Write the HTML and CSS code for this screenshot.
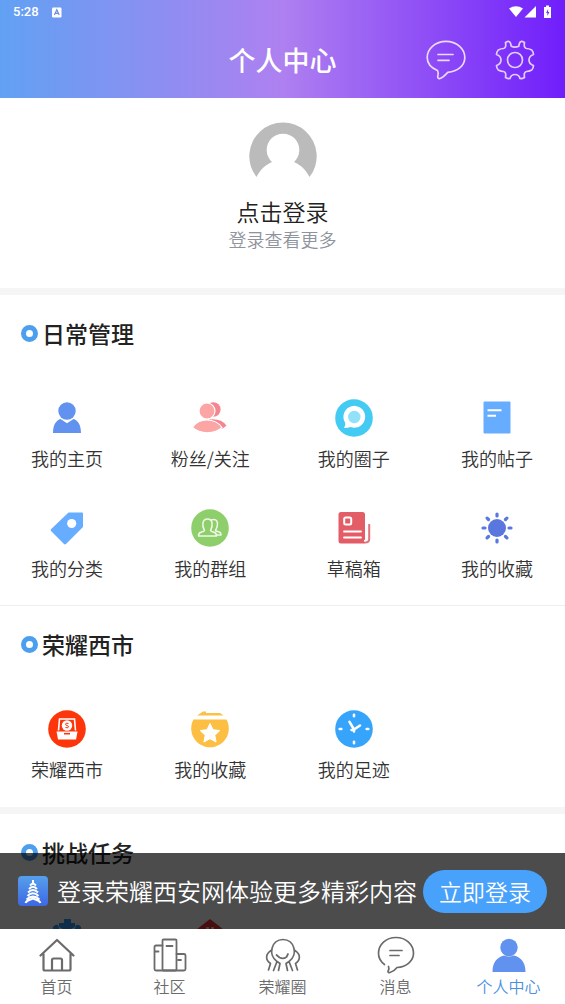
FILE: index.html
```html
<!DOCTYPE html>
<html lang="zh-CN">
<head>
<meta charset="utf-8">
<meta name="viewport" content="width=device-width, initial-scale=1">
<title>个人中心</title>
<link rel="stylesheet" href="styles.css">
</head>
<body>
<div class="app">
  <header class="header">
    <div class="status">
      <span>5:28</span>
      <svg class="status-app" width="10" height="11" viewBox="0 0 10 11"><rect y="0.5" width="9.5" height="10" rx="1.2" fill="#fff"/><path d="M2.4 8 4.8 2.8 7.2 8M3.3 6.4h3" fill="none" stroke="#6f8fd8" stroke-width="1.2"/></svg>
      <svg class="status-system" width="44" height="14" viewBox="0 0 44 14" fill="#fff"><path d="M1 3.500Q8-1 15 3.500L8 12Z"/><path d="M28 1v11.500H16.500Z"/><path d="M36 2h2V.5h3V2h2v11h-7z"/><path d="m40.100 4-2 4h1.300v3l2-4h-1.300z" fill="#7130f5"/></svg>
    </div>
    <div class="titlebar">
      <h1 class="title">个人中心</h1>
      <div class="actions">
        <button class="icon-button" type="button" aria-label="消息">
          <svg width="40" height="40" viewBox="0 0 40 40" fill="none" stroke="#ecd9fc" stroke-width="1.700" stroke-linecap="round" stroke-linejoin="round"><path d="M11.500 30.500C5 27.800 1.200 23 1.200 17.500 1.200 8.500 9.500 1.300 20 1.300s18.800 7.200 18.800 16.200c0 8.300-7 14-17 14.800-2.800 3-5.200 5.500-8.300 6.300-1.800.3-2-1.600-1.600-3 .8-1.700.3-3.600-.4-5.100Z"/><path d="M12 14.500h15M12 20.300h11"/></svg>
        </button>
        <button class="icon-button" type="button" aria-label="设置">
          <svg width="40" height="40" viewBox="0 0 40 40" fill="none" stroke="#e2cdfc" stroke-width="1.700" stroke-linejoin="round"><path d="M16.200 6.200Q15.700 2 14 1.500Q12.500 1.300 10.500 2.500Q11.500 8 8.500 8.500Q6 8.500 3.300 10Q1.500 12 1.500 14.500Q6 16 6 20Q6 24 1.500 25.500Q1.500 28 3.300 30Q6 31.500 8.500 31.500Q11.500 32 10.500 37.500Q13 39 15 38.500Q16 34.500 20 34.500Q24 34.500 25 38.500Q27 39 29.500 37.500Q28.500 32 31.500 31.500Q34 31.500 36.700 30Q38.500 28 38.500 25.500Q34 24 34 20Q34 16 38.500 14.500Q38.500 12 36.700 10Q34 8.500 31.500 8.500Q28.500 8 29.500 2.500Q27.500 1.300 26 1.500Q24.300 2 23.800 6.200Q20 8 16.200 6.200Z"/><circle cx="20" cy="20" r="7.500"/></svg>
        </button>
      </div>
    </div>
  </header>

  <div class="stage">
    <main class="content">
      <a class="profile" href="#login">
        <svg class="avatar" width="68" height="68" viewBox="0 0 68 68"><path d="M7.500 55A33.700 33.700 0 1 1 60.500 55C57 48 52 43 45 40A16.300 16.300 0 1 0 23 40C16 43 11 48 7.500 55Z" fill="#bbb"/></svg>
        <span class="profile-name">点击登录</span>
        <span class="profile-hint">登录查看更多</span>
      </a>

      <section class="section section-ruled">
        <h2 class="section-title">日常管理</h2>
        <div class="grid">
          <a class="entry" href="#home">
            <svg width="38" height="38" viewBox="0 0 38 38" fill="#6192ef"><circle cx="19" cy="12" r="8.700"/><path d="M5 34C5 25.500 8.500 21 12.500 20l6.500 4.300L25.500 20C29.500 21 33 25.500 33 34Z"/></svg>
            <span>我的主页</span>
          </a>
          <a class="entry" href="#fans">
            <svg width="38" height="38" viewBox="0 0 38 38"><g fill="#f58590"><circle cx="22.300" cy="10.500" r="7.300"/><path d="M18 20.500q12-1.500 17.500 6-4 4.500-9 3.500Z"/></g><g fill="#fca5a5" stroke="#fff" stroke-width="1.200"><circle cx="16" cy="12" r="8"/><path d="M1.500 28.500C8 18.500 24 18.500 31 28.500 24 35.500 9 35.500 1.500 28.500Z"/></g></svg>
            <span>粉丝/关注</span>
          </a>
          <a class="entry" href="#circle">
            <svg width="38" height="38" viewBox="0 0 38 38"><circle cx="19" cy="19" r="18.800" fill="#43cbf3"/><path d="M9 29q2-3 1-5.500A10.900 10.900 0 1 1 15.500 28Q13 29 9 29Z" fill="#fff"/><circle cx="19.300" cy="18" r="6.200" fill="#91e1f9"/></svg>
            <span>我的圈子</span>
          </a>
          <a class="entry" href="#posts">
            <svg width="38" height="38" viewBox="0 0 38 38"><rect x="5.500" y="2.500" width="27" height="32" rx="1" fill="#66adff"/><path d="M9.500 11.200h14M9.500 16.700h8.500" stroke="#fff" stroke-width="2"/></svg>
            <span>我的帖子</span>
          </a>
          <a class="entry" href="#tags">
            <svg width="38" height="38" viewBox="0 0 38 38"><path d="M20.500 3.500H34q1 0 1 1V18L18 35q-1 .8-2 0L3 22q-.7-1 0-1.800Z" fill="#66adff"/><circle cx="23.700" cy="14.500" r="4.600" fill="#fff"/></svg>
            <span>我的分类</span>
          </a>
          <a class="entry" href="#groups">
            <svg width="38" height="38" viewBox="0 0 38 38"><circle cx="19" cy="19" r="18.800" fill="#8fcf6b"/><g fill="none" stroke="#f0fae9" stroke-width="1.500" stroke-linejoin="round"><path d="M13.500 21.500C10.500 16 11.500 10 16.500 10s6 6 3 11.500q.3 1 3.500 1.800 2.500.7 2.500 3.700h-18q0-3 2.500-3.700 3.200-.8 3.500-1.800Z"/><path d="M20 11q6-2 6.500 3.500 0 4-2 7 .5.800 3 1.300 2.500.5 2.500 3.200h-4.500"/></g></svg>
            <span>我的群组</span>
          </a>
          <a class="entry" href="#drafts">
            <svg width="38" height="38" viewBox="0 0 38 38"><path d="M6 3h21.500q2.500 0 2.500 2.500v29H6q-2.500 0-2.500-2.500V5.500Q3.500 3 6 3Z" fill="#e35d67"/><path d="M30 33.500q4.200 0 4.200-3.500V15" fill="none" stroke="#e3747b" stroke-width="2"/><path d="M31 14v15.500q0 2.500-2 2.500" fill="none" stroke="#fff" stroke-width="1.500"/><rect x="9.200" y="8.500" width="7" height="7" rx="1.500" fill="none" stroke="#fff" stroke-width="2"/><path d="M9 22.500h17M9 28.500h17" stroke="#fff" stroke-width="1.800" stroke-linecap="round"/></svg>
            <span>草稿箱</span>
          </a>
          <a class="entry" href="#favorites">
            <svg width="38" height="38" viewBox="0 0 38 38"><circle cx="19" cy="19" r="9" fill="#5a76df"/><path d="M19 5v2M19 31v2M5 19h2M31 19h2M9.100 9.100l1.400 1.400M27.500 27.500l1.400 1.400M9.100 28.900l1.400-1.400M27.500 10.500l1.400-1.400" stroke="#5a76df" stroke-width="3.200" stroke-linecap="round"/></svg>
            <span>我的收藏</span>
          </a>
        </div>
      </section>

      <section class="section section-banded">
        <h2 class="section-title">荣耀西市</h2>
        <div class="grid">
          <a class="entry" href="#market">
            <svg width="38" height="38" viewBox="0 0 38 38"><circle cx="19" cy="19" r="18.800" fill="#fc350b"/><path d="M10.500 20.500 11.500 9h15l1 11.500" fill="none" stroke="#fff" stroke-width="1.600"/><circle cx="19" cy="15.500" r="5.200" fill="#fff"/><path d="M20.500 13.500q-3-1-3 .7 0 1 1.500 1.300t1.500 1.300q0 1.700-3 .7" fill="none" stroke="#fc350b" stroke-width="1"/><path d="M8.500 21.500h21L28 29.500H10Z" fill="#fff"/><path d="M16 23.700h6" stroke="#fc350b" stroke-width="1.600"/></svg>
            <span>荣耀西市</span>
          </a>
          <a class="entry" href="#market-favorites">
            <svg width="38" height="38" viewBox="0 0 38 38"><path d="M6 5.500 12 1.500h3V3h14l3.500 2.500Z" fill="#fcc046"/><path d="M2.500 9.500h33A18.800 18.800 0 1 1 2.500 9.500Z" fill="#fdbf43"/><path d="m19 13.500 3 6.200 6.800.9-5 4.700 1.300 6.700-6.100-3.300-6.100 3.300 1.300-6.700-5-4.700 6.800-.9Z" fill="#fff" stroke="#fff" stroke-linejoin="round"/></svg>
            <span>我的收藏</span>
          </a>
          <a class="entry" href="#footprints">
            <svg width="38" height="38" viewBox="0 0 38 38"><circle cx="19" cy="19" r="18.800" fill="#36a4fb"/><path d="M19 4.700v1.600M19 31.700v1.600M4.700 19h1.600M31.700 19h1.600M14.500 11.800 19 19.500l6-4M16.500 20l2.500-.5v2" fill="none" stroke="#fff" stroke-width="2.600" stroke-linecap="round"/></svg>
            <span>我的足迹</span>
          </a>
        </div>
      </section>

      <section class="section">
        <h2 class="section-title">挑战任务</h2>
        <div class="grid">
          <a class="entry" href="#tasks">
            <svg width="38" height="38" viewBox="0 0 38 38" fill="#339bf5"><path d="M16 1h7v4h4v4l-8 4-8-4V5h5ZM5 9q2-3 5-2l2 6H5ZM33 9q-2-3-5-2l-2 6h7Z"/><circle cx="19" cy="25" r="13"/></svg>
          </a>
          <a class="entry" href="#rewards">
            <svg width="38" height="38" viewBox="0 0 38 38"><path d="m19 1 18 14-18 20L1 15Z" fill="#f0353b"/><path d="M15 10h3M20 10h3" stroke="#fff" stroke-width="1.500"/></svg>
          </a>
        </div>
      </section>
    </main>

    <aside class="prompt">
      <svg class="logo" width="30" height="30" viewBox="0 0 30 30"><defs><linearGradient id="logo-fill" x1="0" y1="0" x2="0" y2="1"><stop offset="0" stop-color="#56a0ec"/><stop offset="1" stop-color="#3d68e3"/></linearGradient></defs><rect width="30" height="30" rx="4" fill="url(#logo-fill)"/><path d="M15 4v3M12 9.500l3-2.500 3 2.500M11 13q4-4.500 8 0M10 16.500q5-5 10 0M9.500 20q5.500-5.500 11 0M8.500 23.500q6.500-6 13 0M7.500 27q1-2.500 5-3.500l2.500-1 2.500 1q4 1 5 3.500" fill="none" stroke="#fff" stroke-width="2"/></svg>
      <span class="prompt-text">登录荣耀西安网体验更多精彩内容</span>
      <button class="login" type="button">立即登录</button>
    </aside>
  </div>

  <nav class="tabs">
    <a class="tab" href="#index">
      <svg width="38" height="38" viewBox="0 0 38 38" fill="none" stroke="#6b6b6b" stroke-width="2.200" stroke-linejoin="round" stroke-linecap="round"><path d="M2.500 19.500 19 4l16.500 15.500M5.500 18v15q0 1.500 1.500 1.500h24q1.500 0 1.500-1.500V18M14 34V24q0-1.500 1.500-1.500h7Q24 22.500 24 24v10"/></svg>
      <span>首页</span>
    </a>
    <a class="tab" href="#community">
      <svg width="38" height="38" viewBox="0 0 38 38" fill="none" stroke="#6b6b6b" stroke-width="1.800" stroke-linejoin="round" stroke-linecap="round"><rect x="11.500" y="3.500" width="14" height="31" rx="1"/><path d="M11.500 9.500H5q-1.500 0-1.500 1.500v22q0 1.500 1.500 1.500h28q1.500 0 1.500-1.500V19.500q0-1.500-1.500-1.500h-7.500M15.500 10h6M4 15.500h3.500M27 24h3"/></svg>
      <span>社区</span>
    </a>
    <a class="tab" href="#circles">
      <svg width="38" height="38" viewBox="0 0 38 38" fill="none" stroke="#6b6b6b" stroke-width="1.700" stroke-linejoin="round" stroke-linecap="round"><path d="M13 25.500C3.500 19 7.500 3.500 19 3.500S34.500 19 25 25.500L28.500 34.500M25 25.500l-3 2 1.500 7M13 25.500l3 2-1.500 7M13 25.500 9.500 34.500M7 14.500C1 18.500 1.500 24 6.500 27.500L4.500 34M31 14.500C37 18.500 36.500 24 31.500 27.500l2 6.500M12.500 19l3 2.500Q19 23.500 22.500 21L24 18"/></svg>
      <span>荣耀圈</span>
    </a>
    <a class="tab" href="#messages">
      <svg width="38" height="38" viewBox="0 0 38 38" fill="none" stroke="#6b6b6b" stroke-width="1.700" stroke-linecap="round" stroke-linejoin="round"><path d="M11.500 30.500q1 2-.5 5 0 1.500 2 1 4-1 7-5C29.500 31 36.500 25 36.500 17.300 36.500 8.500 29 1.500 19 1.500S1.500 8.500 1.500 17.300q0 6.700 6 11.200M13 14.500h12M13 19.500h9"/></svg>
      <span>消息</span>
    </a>
    <a class="tab tab-active" href="#me" aria-current="page">
      <svg width="38" height="38" viewBox="0 0 38 38" fill="#6192ef"><circle cx="19" cy="11.500" r="8.700"/><path d="M2.500 36C2.500 26 7 21.500 14 19.500q5 2 10 0C31 21.500 35.500 26 35.500 36Z"/></svg>
      <span>个人中心</span>
    </a>
  </nav>
</div>
</body>
</html>
```
FILE: styles.css
```css
*,
*::before { box-sizing: border-box; }

body {
  margin: 0;
  background: #fff;
  color: #222;
  font-family: "Noto Sans CJK SC", sans-serif;
  font-weight: 350;
}

a { color: inherit; text-decoration: none; }

button {
  border: 0;
  padding: 0;
  background: none;
  font: inherit;
  color: inherit;
}

svg { display: block; flex: none; }

.app {
  display: flex;
  flex-direction: column;
  height: 100vh;
}

.header {
  color: #fff;
  background: linear-gradient(90deg, #61a1f3 0%, #ae80f0 50%, #701efb 100%);
}

.status {
  display: flex;
  align-items: center;
  height: 24px;
  padding: 0 13px;
  font: 500 13px/24px Roboto, sans-serif;
}

.status-app { margin-left: 13px; }
.status-system { margin-left: auto; }

.titlebar {
  display: grid;
  grid-template-columns: 1fr auto 1fr;
  align-items: center;
  height: 74px;
  padding: 0 30px 2px;
}

.title {
  grid-column: 2;
  margin: 0;
  font-size: 27px;
  font-weight: 500;
  line-height: 40px;
}

.actions {
  display: flex;
  justify-content: flex-end;
  gap: 29px;
}

.stage {
  position: relative;
  flex: 1;
  min-height: 0;
}

.content {
  height: 100%;
  overflow: hidden;
}

.profile {
  display: flex;
  flex-direction: column;
  align-items: center;
  padding: 24px 0 36px;
  border-bottom: 7px solid #f5f5f5;
}

.avatar { margin-bottom: 6px; }

.profile-name {
  font-size: 23px;
  line-height: 30px;
}

.profile-hint {
  color: #8e939c;
  font-size: 18px;
  line-height: 26px;
}

.section { padding: 22px 0 25px; }
.section-ruled { border-bottom: 1px solid #eee; }
.section-banded { border-bottom: 7px solid #f5f5f5; }

.section-title {
  display: flex;
  align-items: center;
  gap: 4px;
  margin: 0 0 50px;
  padding-left: 21px;
  font-size: 23px;
  font-weight: 500;
  line-height: 32px;
}

.section-title::before {
  content: "";
  width: 17px;
  height: 17px;
  border: 5px solid #4c9fef;
  border-radius: 50%;
}

.section-banded { padding-bottom: 26px; }

.grid {
  display: grid;
  grid-template-columns: repeat(4, 72px);
  justify-content: space-between;
  row-gap: 39px;
  padding: 0 32px 0 31px;
}

.entry {
  display: flex;
  flex-direction: column;
  align-items: center;
  gap: 9px;
  color: #333;
  font-size: 18px;
  line-height: 24px;
  white-space: nowrap;
}

.prompt {
  position: absolute;
  right: 0;
  bottom: 0;
  left: 0;
  display: flex;
  align-items: center;
  height: 76px;
  padding: 0 18px;
  background: rgba(0, 0, 0, 0.7);
  color: #fff;
}

.prompt-text {
  flex: 1;
  margin-left: 9px;
  font-size: 24px;
  line-height: 36px;
  white-space: nowrap;
}

.login {
  padding: 0 16px;
  border-radius: 22px;
  background: #48a1fa;
  font-size: 23px;
  line-height: 43px;
  white-space: nowrap;
}

.tabs {
  display: grid;
  grid-template-columns: repeat(5, 1fr);
  height: 75px;
  padding-top: 7px;
  background: #fff;
}

.tab {
  display: flex;
  flex-direction: column;
  align-items: center;
  color: #6b6b6b;
  font-size: 16px;
  line-height: 24px;
}

.tab-active { color: #4a90e2; }
```
